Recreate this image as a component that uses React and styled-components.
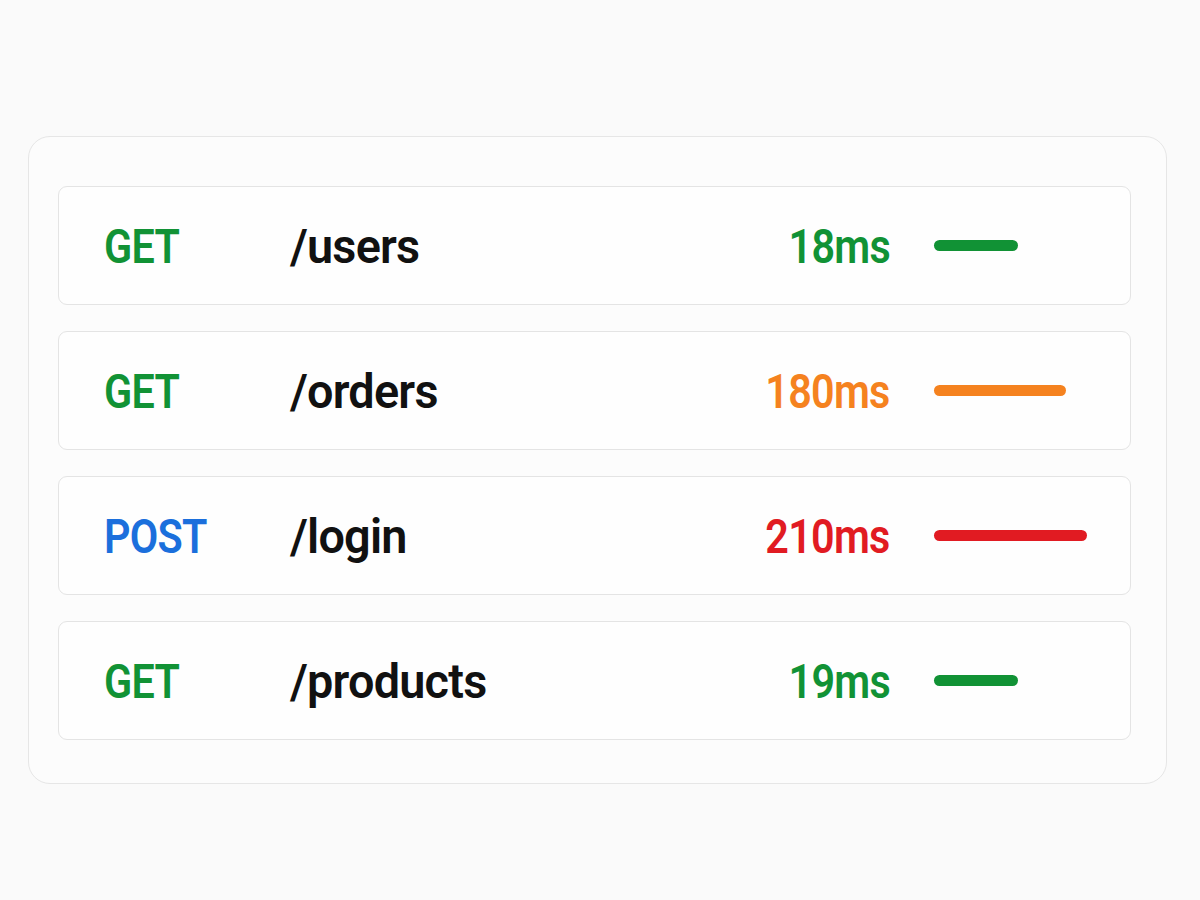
import React from 'react';
import styled, { createGlobalStyle } from 'styled-components';

const GlobalStyle = createGlobalStyle`
  html, body {
    margin: 0;
    padding: 0;
    background: #fafafa;
    font-family: Roboto, "Liberation Sans", sans-serif;
  }
`;

const COLORS = {
  green: '#119235',
  orange: '#f5821f',
  red: '#e11b22',
  blue: '#1b6fdc',
};

const requests = [
  { method: 'GET', path: '/users', ms: 18, tone: 'green', bar: 84 },
  { method: 'GET', path: '/orders', ms: 180, tone: 'orange', bar: 132 },
  { method: 'POST', path: '/login', ms: 210, tone: 'red', bar: 153 },
  { method: 'GET', path: '/products', ms: 19, tone: 'green', bar: 84 },
];

const Page = styled.div`
  width: 1200px;
  height: 900px;
  box-sizing: border-box;
  padding: 136px 33px 0 28px;
`;

const Card = styled.div`
  box-sizing: border-box;
  height: 648px;
  background: #fcfcfc;
  border: 1px solid #e6e6e6;
  border-radius: 22px;
  padding: 49px 35px 0 29px;
  display: flex;
  flex-direction: column;
  gap: 26px;
`;

const Row = styled.div`
  box-sizing: border-box;
  height: 119px;
  background: #fefefe;
  border: 1px solid #e4e4e4;
  border-radius: 9px;
  padding: 3px 0 0 45px;
  display: grid;
  grid-template-columns: 186px 1fr auto 196px;
  align-items: center;
`;

const Text = styled.span`
  display: inline-block;
  font-size: 48px;
  font-weight: 600;
  letter-spacing: -0.8px;
  transform: scaleX(${p => p.$scale || 1});
  transform-origin: ${p => (p.$right ? 'right' : 'left')} center;
  color: ${p => p.$color || '#111'};
  line-height: 1;
`;

const Time = styled(Text)`
  justify-self: end;
  margin-right: 44px;
`;

const Bar = styled.div`
  height: 11px;
  margin-top: -3px;
  border-radius: 6px;
  background: ${p => p.$color};
`;

const methodColor = m => (m === 'POST' ? COLORS.blue : COLORS.green);

export default function App() {
  return (
    <Page>
      <GlobalStyle />
      <Card>
        {requests.map(r => (
          <Row key={r.path}>
            <Text $scale={0.86} $color={methodColor(r.method)}>{r.method}</Text>
            <Text $scale={0.975}>{r.path}</Text>
            <Time $right $scale={0.86} $color={COLORS[r.tone]}>{r.ms}ms</Time>
            <Bar $color={COLORS[r.tone]} style={{ width: r.bar }} />
          </Row>
        ))}
      </Card>
    </Page>
  );
}
